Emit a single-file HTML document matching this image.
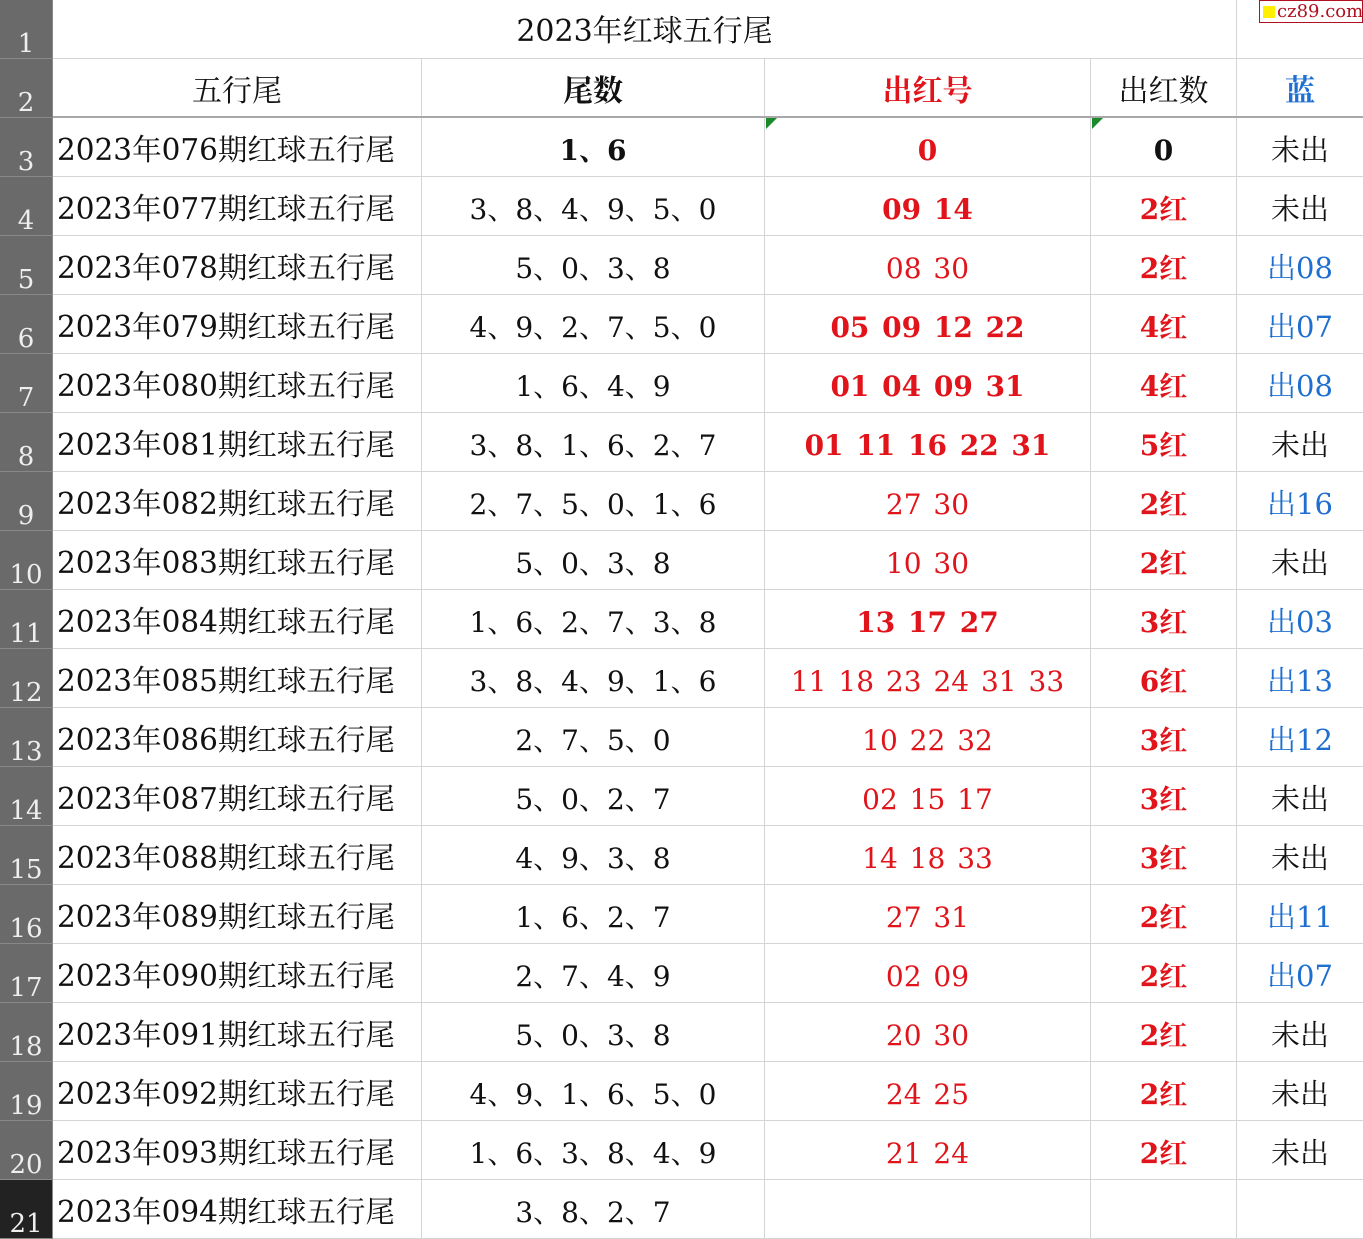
<!DOCTYPE html>
<html><head><meta charset="utf-8"><style>
body{margin:0;width:1363px;height:1234px;overflow:hidden;background:#fff;font-family:"DejaVu Serif","Noto Serif CJK SC",serif;position:relative}
.row{position:absolute;left:0;width:1363px;height:59px;}
.row>div{position:absolute;top:0;height:58px;border-right:1px solid #d4d4d4;border-bottom:1px solid #d4d4d4;text-align:center;font-size:28px;line-height:65px;color:#111;white-space:nowrap;overflow:hidden;word-spacing:3px}
.row>.h{left:0;width:52px;background:#6a6a6a;color:#eee;font-size:26px;line-height:28px;height:58px;border-right:1px solid #888;border-bottom:1px solid #888;display:flex;align-items:flex-end;justify-content:center}
.row>.a{left:53px;width:364px;text-align:left;padding-left:4px;font-size:29.5px;word-spacing:0}
.row>.bb{left:422px;width:342px}
.row>.c{left:765px;width:325px}
.row>.d{left:1091px;width:145px}
.row>.e{left:1237px;width:126px;border-right:none;font-size:29px}
.r{color:#e0141a!important}.b{font-weight:bold}.bl{color:#1e6fd0!important}
.tri{position:absolute;width:0;height:0;border-top:11px solid #1a8a2a;border-right:11px solid transparent}
</style></head><body>
<div class="row" style="top:0"><div class="h">1</div><div style="left:53px;width:1183px;font-size:30px;line-height:64px">2023年红球五行尾</div><div class="e"></div></div>
<div class="row" style="top:59px"><div class="h">2</div><div class="a" style="text-align:center;padding:0;width:368px;font-size:30px">五行尾</div><div class="bb b" style="font-size:30px">尾数</div><div class="c r b" style="font-size:30px">出红号</div><div class="d" style="font-size:30px">出红数</div><div class="e bl b" style="font-size:30px">蓝</div></div>
<div style="position:absolute;left:53px;top:116px;width:1310px;height:2px;background:#a8a8a8"></div>
<div class="row" style="top:118px"><div class="h">3</div><div class="a">2023年076期红球五行尾</div><div class="bb b">1、6</div><div class="c r b">0</div><div class="d b">0</div><div class="e">未出</div></div>
<div class="row" style="top:177px"><div class="h">4</div><div class="a">2023年077期红球五行尾</div><div class="bb">3、8、4、9、5、0</div><div class="c r b">09 14</div><div class="d r b">2红</div><div class="e">未出</div></div>
<div class="row" style="top:236px"><div class="h">5</div><div class="a">2023年078期红球五行尾</div><div class="bb">5、0、3、8</div><div class="c r">08 30</div><div class="d r b">2红</div><div class="e bl">出08</div></div>
<div class="row" style="top:295px"><div class="h">6</div><div class="a">2023年079期红球五行尾</div><div class="bb">4、9、2、7、5、0</div><div class="c r b">05 09 12 22</div><div class="d r b">4红</div><div class="e bl">出07</div></div>
<div class="row" style="top:354px"><div class="h">7</div><div class="a">2023年080期红球五行尾</div><div class="bb">1、6、4、9</div><div class="c r b">01 04 09 31</div><div class="d r b">4红</div><div class="e bl">出08</div></div>
<div class="row" style="top:413px"><div class="h">8</div><div class="a">2023年081期红球五行尾</div><div class="bb">3、8、1、6、2、7</div><div class="c r b">01 11 16 22 31</div><div class="d r b">5红</div><div class="e">未出</div></div>
<div class="row" style="top:472px"><div class="h">9</div><div class="a">2023年082期红球五行尾</div><div class="bb">2、7、5、0、1、6</div><div class="c r">27 30</div><div class="d r b">2红</div><div class="e bl">出16</div></div>
<div class="row" style="top:531px"><div class="h">10</div><div class="a">2023年083期红球五行尾</div><div class="bb">5、0、3、8</div><div class="c r">10 30</div><div class="d r b">2红</div><div class="e">未出</div></div>
<div class="row" style="top:590px"><div class="h">11</div><div class="a">2023年084期红球五行尾</div><div class="bb">1、6、2、7、3、8</div><div class="c r b">13 17 27</div><div class="d r b">3红</div><div class="e bl">出03</div></div>
<div class="row" style="top:649px"><div class="h">12</div><div class="a">2023年085期红球五行尾</div><div class="bb">3、8、4、9、1、6</div><div class="c r">11 18 23 24 31 33</div><div class="d r b">6红</div><div class="e bl">出13</div></div>
<div class="row" style="top:708px"><div class="h">13</div><div class="a">2023年086期红球五行尾</div><div class="bb">2、7、5、0</div><div class="c r">10 22 32</div><div class="d r b">3红</div><div class="e bl">出12</div></div>
<div class="row" style="top:767px"><div class="h">14</div><div class="a">2023年087期红球五行尾</div><div class="bb">5、0、2、7</div><div class="c r">02 15 17</div><div class="d r b">3红</div><div class="e">未出</div></div>
<div class="row" style="top:826px"><div class="h">15</div><div class="a">2023年088期红球五行尾</div><div class="bb">4、9、3、8</div><div class="c r">14 18 33</div><div class="d r b">3红</div><div class="e">未出</div></div>
<div class="row" style="top:885px"><div class="h">16</div><div class="a">2023年089期红球五行尾</div><div class="bb">1、6、2、7</div><div class="c r">27 31</div><div class="d r b">2红</div><div class="e bl">出11</div></div>
<div class="row" style="top:944px"><div class="h">17</div><div class="a">2023年090期红球五行尾</div><div class="bb">2、7、4、9</div><div class="c r">02 09</div><div class="d r b">2红</div><div class="e bl">出07</div></div>
<div class="row" style="top:1003px"><div class="h">18</div><div class="a">2023年091期红球五行尾</div><div class="bb">5、0、3、8</div><div class="c r">20 30</div><div class="d r b">2红</div><div class="e">未出</div></div>
<div class="row" style="top:1062px"><div class="h">19</div><div class="a">2023年092期红球五行尾</div><div class="bb">4、9、1、6、5、0</div><div class="c r">24 25</div><div class="d r b">2红</div><div class="e">未出</div></div>
<div class="row" style="top:1121px"><div class="h">20</div><div class="a">2023年093期红球五行尾</div><div class="bb">1、6、3、8、4、9</div><div class="c r">21 24</div><div class="d r b">2红</div><div class="e">未出</div></div>
<div class="row" style="top:1180px"><div class="h" style="background:#222">21</div><div class="a">2023年094期红球五行尾</div><div class="bb">3、8、2、7</div><div class="c"></div><div class="d"></div><div class="e"></div></div>
<div class="tri" style="left:766px;top:118px"></div>
<div class="tri" style="left:1092px;top:118px"></div>
<div style="position:absolute;left:1259px;top:0;width:102px;height:21px;border:1px solid #b01020;background:#fff;font-size:18px;line-height:21px;color:#b01020;font-family:'DejaVu Serif',serif;white-space:nowrap;overflow:hidden"><span style="display:inline-block;width:12px;height:12px;background:#ffef00;margin:0 2px 0 3px;vertical-align:-1px"></span>cz89.com</div>
</body></html>
